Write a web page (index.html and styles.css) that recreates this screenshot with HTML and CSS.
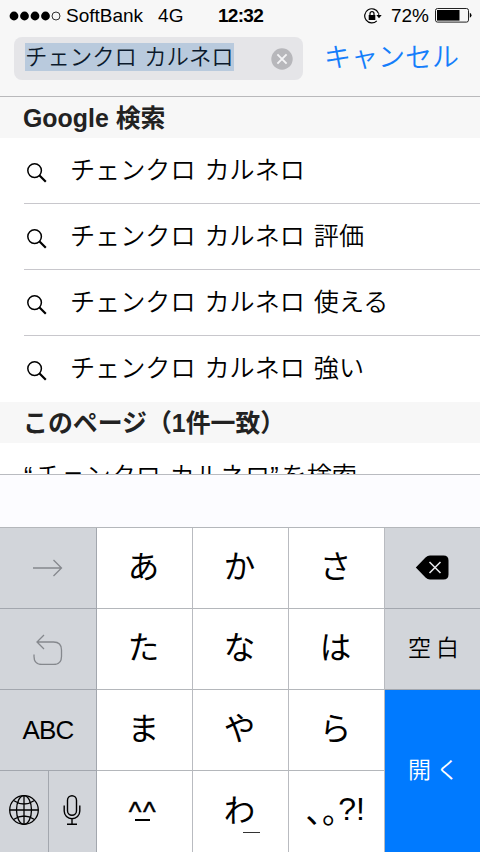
FILE: index.html
```
<!DOCTYPE html>
<html lang="ja">
<head>
    <meta charset="UTF-8">
    <meta name="viewport" content="width=device-width, initial-scale=1.0">
    <title>Google 検索</title>
    <link rel="stylesheet" href="styles.css">
</head>
<body>
    <div class="screen">
        <!-- Status bar -->
        <div class="status-bar">
            <div class="status-left">
                <svg class="signal" width="52" height="10" viewBox="0 0 52 10">
                    <circle cx="5" cy="5" r="4.4"/>
                    <circle cx="15.5" cy="5" r="4.4"/>
                    <circle cx="26" cy="5" r="4.4"/>
                    <circle cx="36.5" cy="5" r="4.4"/>
                    <circle cx="47" cy="5" r="4" fill="none" stroke="#000" stroke-width="0.8"/>
                </svg>
                <span class="carrier">SoftBank</span>
                <span class="network">4G</span>
            </div>
            <span class="clock">12:32</span>
            <div class="status-right">
                <svg class="lock" width="18" height="16" viewBox="0 0 18 16">
                    <path d="M14.3 5A7.1 7.1 0 1 0 12.8 12.9" fill="none" stroke="#000" stroke-width="1.2"/>
                    <path d="M12.3 7h5.4L15 10.3zM14.3 5l.9 0v3h-1z"/>
                    <rect x="4.7" y="7" width="6.6" height="5"/>
                    <path d="M6 7.5V5.7a2 2 0 0 1 4 0V7.5" fill="none" stroke="#000" stroke-width="1.2"/>
                </svg>
                <span class="percent">72%</span>
                <svg class="battery" width="37" height="15" viewBox="0 0 37 15">
                    <rect x="0.5" y="0.5" width="33" height="13.6" rx="2" fill="none" stroke="#222" stroke-width="1"/>
                    <rect x="2" y="2" width="22.5" height="10.6"/>
                    <path d="M34.8 4.8q1.7.6 1.7 2.5t-1.7 2.5z"/>
                </svg>
            </div>
        </div>

        <!-- Search field -->
        <div class="search-bar">
            <div class="search-field">
                <span class="query">チェンクロ カルネロ</span>
                <svg class="clear" width="22" height="22" viewBox="0 0 22 22">
                    <circle cx="11" cy="11" r="10.7" fill="#b7b7bb"/>
                    <path d="M6.4 6.4l9.2 9.2M15.6 6.4l-9.2 9.2" stroke="#f4f4f6" stroke-width="1.9"/>
                </svg>
            </div>
            <span class="cancel">キャンセル</span>
        </div>

        <!-- Suggestions -->
        <div class="results">
            <h2 class="section-title">Google 検索</h2>
            <ul class="suggestions">
                <li class="suggestion">
                    <svg class="search-icon" width="20" height="20" viewBox="0 0 20 20"><circle cx="7.6" cy="7.6" r="6.8"/><path d="M12.3 12.3l6.5 6.5"/></svg>
                    <span>チェンクロ カルネロ</span>
                </li>
                <li class="suggestion">
                    <svg class="search-icon" width="20" height="20" viewBox="0 0 20 20"><circle cx="7.6" cy="7.6" r="6.8"/><path d="M12.3 12.3l6.5 6.5"/></svg>
                    <span>チェンクロ カルネロ 評価</span>
                </li>
                <li class="suggestion">
                    <svg class="search-icon" width="20" height="20" viewBox="0 0 20 20"><circle cx="7.6" cy="7.6" r="6.8"/><path d="M12.3 12.3l6.5 6.5"/></svg>
                    <span>チェンクロ カルネロ 使える</span>
                </li>
                <li class="suggestion">
                    <svg class="search-icon" width="20" height="20" viewBox="0 0 20 20"><circle cx="7.6" cy="7.6" r="6.8"/><path d="M12.3 12.3l6.5 6.5"/></svg>
                    <span>チェンクロ カルネロ 強い</span>
                </li>
            </ul>
            <h2 class="section-title">このページ（1件一致）</h2>
            <div class="find-row"><span class="quote">“</span>チェンクロ カルネロ<span class="quote">”</span>を検索</div>
        </div>

        <!-- Keyboard -->
        <div class="candidates"></div>
        <div class="keyboard">
            <div class="key gray">
                <svg width="30" height="18" viewBox="0 0 30 18" fill="none" stroke="#85888d" stroke-width="1.3">
                    <path d="M0 9h28.5M20.5 1l8 8-8 8"/>
                </svg>
            </div>
            <div class="key kana">あ</div>
            <div class="key kana">か</div>
            <div class="key kana">さ</div>
            <div class="key gray">
                <svg class="delete" width="34" height="25" viewBox="0 0 34 25">
                    <path d="M.8 12.5L10.5 2.6Q12.5.5 15 .5h13.5Q33.5.5 33.5 5.5v14Q33.5 24.5 28.5 24.5H15Q12.5 24.5 10.5 22.4z"/>
                    <path d="M14.5 7l11 11M25.5 7l-11 11" stroke="#e4e6ea" stroke-width="1.6"/>
                </svg>
            </div>

            <div class="key gray">
                <svg class="undo" width="30" height="31" viewBox="0 0 30 31" fill="none" stroke="#85888d" stroke-width="1.3">
                    <path d="M4 8h16.5q8 0 8 8v6.5q0 8-8 8H9q-8 0-8-8V20.5M11 1L4 8l7 7"/>
                </svg>
            </div>
            <div class="key kana">た</div>
            <div class="key kana">な</div>
            <div class="key kana">は</div>
            <div class="key gray word">空白</div>

            <div class="key gray abc">ABC</div>
            <div class="key kana">ま</div>
            <div class="key kana">や</div>
            <div class="key kana">ら</div>
            <div class="key go word">開く</div>

            <div class="key-pair">
                <div class="key gray">
                    <svg width="30" height="30" viewBox="0 0 30 30" fill="none" stroke="#000" stroke-width="1.3">
                        <circle cx="15" cy="15" r="14.3"/>
                        <ellipse cx="15" cy="15" rx="7.5" ry="14.3"/>
                        <path d="M15 .7v28.6M.7 15h28.6M4.5 5.5q10.5 7 21 0M4.5 24.5q10.5-7 21 0"/>
                    </svg>
                </div>
                <div class="key gray">
                    <svg width="18" height="30" viewBox="0 0 18 30" fill="none" stroke="#000" stroke-width="1.4">
                        <rect x="4.5" y=".7" width="9" height="19.6" rx="4.5"/>
                        <path d="M1.2 10.5v5.5a7.8 7.8 0 0 0 15.6 0v-5.5M9 24v5.2M4 29.2h10"/>
                    </svg>
                </div>
            </div>
            <div class="key">
                <div class="face"><span>^^</span><i></i></div>
            </div>
            <div class="key kana"><span class="wa">わ<span class="underscore"></span></span></div>
            <div class="key punct"><span class="ja-punct">､｡</span>?!</div>
        </div>
    </div>
</body>
</html>
```
FILE: styles.css
```
* {
    box-sizing: border-box;
}
body {
    margin: 0;
    font-family: "Liberation Sans", "Noto Sans CJK JP", sans-serif;
    color: #000;
    background-color: #f7f7f7;
}
svg {
    display: block;
    flex: none;
}
.screen {
    width: 480px;
    height: 852px;
    display: flex;
    flex-direction: column;
    overflow: hidden;
}

/* Status bar */
.status-bar {
    display: grid;
    grid-template-columns: 1fr auto 1fr;
    align-items: center;
    height: 31px;
    padding: 0 8px 0 9px;
    font-size: 19px;
}
.status-left, .status-right {
    display: flex;
    align-items: center;
}
.status-right {
    justify-content: flex-end;
}
.carrier {
    margin-left: 5px;
}
.network {
    margin-left: 15px;
}
.clock {
    font-weight: bold;
    letter-spacing: -0.7px;
}
.percent {
    margin: 0 6px 0 9px;
}

/* Search field */
.search-bar {
    display: flex;
    height: 66px;
    padding: 6px 0 0 14px;
    border-bottom: 1px solid #b9b9bb;
}
.search-field {
    display: flex;
    align-items: center;
    justify-content: space-between;
    width: 289px;
    height: 43px;
    padding: 0 10px 3px 11px;
    border-radius: 8px;
    background-color: #e5e5e8;
}
.query {
    height: 28px;
    line-height: 29px;
    font-size: 22.4px;
    font-weight: 350;
    word-spacing: 1px;
    white-space: nowrap;
    color: #0c1a2c;
    background-color: #b9cadd;
}
.clear {
    margin-top: 3px;
}
.cancel {
    margin-left: 21px;
    line-height: 43px;
    font-size: 27px;
    font-weight: 350;
    color: #157efb;
}

/* Suggestions */
.results {
    height: 377px;
    overflow: hidden;
    background-color: #fff;
}
.section-title {
    height: 41px;
    margin: 0;
    padding-left: 23px;
    line-height: 43px;
    font-size: 24.9px;
    color: #222;
    background-color: #f7f7f7;
}
.suggestions {
    margin: 0;
    padding: 0 0 0 24px;
    list-style: none;
}
.suggestion {
    display: flex;
    align-items: center;
    height: 66px;
    padding: 0 0 6px 3px;
    border-bottom: 1px solid #c8c7cc;
    font-size: 25.1px;
    font-weight: 350;
    word-spacing: 2px;
}
.suggestion:last-child {
    border-bottom: none;
}
.search-icon {
    margin: 10px 23px 0 0;
    fill: none;
    stroke: #000;
    stroke-width: 1.5;
}
.search-icon path {
    stroke-width: 2.2;
}
.find-row {
    padding-left: 24px;
    line-height: 66px;
    font-size: 25.1px;
    font-weight: 350;
    word-spacing: 2px;
    white-space: nowrap;
}
.quote {
    letter-spacing: 3px;
}

/* Keyboard */
.candidates {
    height: 53px;
    border-top: 1px solid #b9bbc0;
    background-color: #fcfcff;
}
.keyboard {
    flex: 1;
    display: grid;
    grid-template-columns: 97px 96px 96px 96px 95px;
    grid-template-rows: repeat(4, 81px);
    border-top: 1px solid #b4b7bb;
}
.key {
    display: flex;
    align-items: center;
    justify-content: center;
    border-right: 1px solid #b9bbc0;
    border-bottom: 1px solid #b4b7bb;
    font-size: 32px;
    background-color: #fff;
}
.gray {
    border-color: #a3a7ae;
    background-color: #d2d5da;
}
.key:nth-child(5n) {
    border-right: none;
}
.kana {
    padding: 0 2px 8px 0;
    font-size: 31.5px;
}
.delete {
    margin: 0 2px 1px 0;
}
.abc {
    font-size: 26px;
    letter-spacing: -0.8px;
}
.word {
    padding: 0 0 6px 7px;
    font-size: 23px;
    font-weight: 350;
    letter-spacing: 5px;
}
.go {
    grid-row: 3 / span 2;
    grid-column: 5;
    padding-bottom: 7px;
    border: none;
    color: #fff;
    background-color: #007aff;
}
.key-pair {
    display: grid;
    grid-template-columns: 49px 48px;
}
.key-pair .key, .keyboard > div:nth-child(n+16) {
    border-bottom: none;
}
.key-pair .key {
    padding: 0 1px 3px 0;
}
.face {
    display: flex;
    flex-direction: column;
    align-items: center;
    padding: 0 3px 4px 0;
    line-height: 28px;
    font-size: 27px;
}
.face span {
    height: 21px;
    letter-spacing: 1.5px;
    -webkit-text-stroke: 0.5px #000;
}
.face i {
    width: 15px;
    height: 2px;
    margin-right: 1px;
    background-color: #000;
}
.wa {
    position: relative;
}
.underscore {
    position: absolute;
    right: -5px;
    bottom: -2px;
    width: 17px;
    height: 1px;
    background-color: #333;
}
.punct {
    padding: 0 2px 5px 0;
}
.ja-punct {
    font-family: "Noto Sans CJK JP", sans-serif;
}
```
